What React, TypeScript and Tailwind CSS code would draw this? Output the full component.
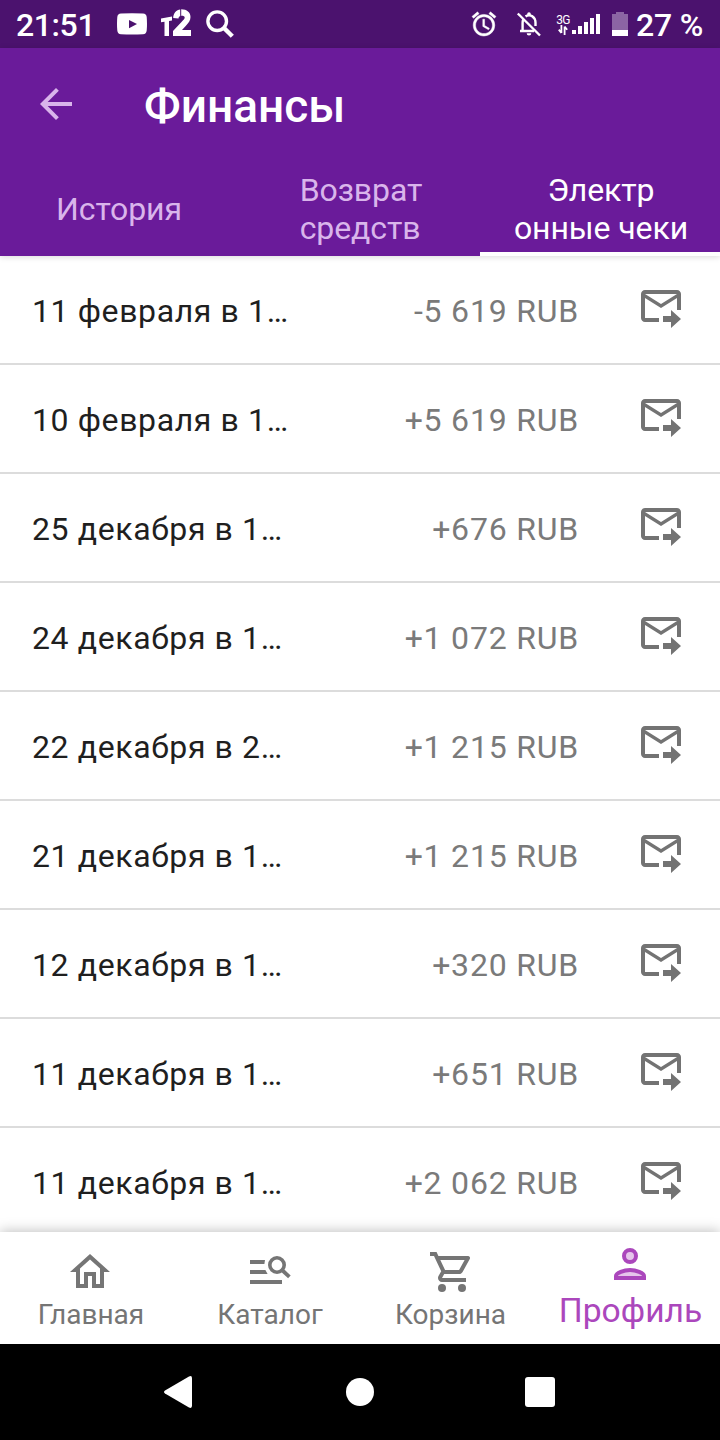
import type { ReactNode } from 'react';

interface Receipt {
  date: string;
  amount: string;
}

const receipts: Receipt[] = [
  { date: '11 февраля в 1…', amount: '-5 619 RUB' },
  { date: '10 февраля в 1…', amount: '+5 619 RUB' },
  { date: '25 декабря в 1…', amount: '+676 RUB' },
  { date: '24 декабря в 1…', amount: '+1 072 RUB' },
  { date: '22 декабря в 2…', amount: '+1 215 RUB' },
  { date: '21 декабря в 1…', amount: '+1 215 RUB' },
  { date: '12 декабря в 1…', amount: '+320 RUB' },
  { date: '11 декабря в 1…', amount: '+651 RUB' },
  { date: '11 декабря в 1…', amount: '+2 062 RUB' },
];

function Icon({ children, className = 'w-12 h-12' }: { children: ReactNode; className?: string }) {
  return (
    <svg viewBox="0 0 24 24" fill="currentColor" className={`flex-shrink-0 ${className}`}>
      {children}
    </svg>
  );
}

function StatusBar() {
  return (
    <div className="flex items-center h-12 bg-[#4b126e] text-white">
      <span className="w-[117px] pl-4 text-[32px] leading-[48px] font-medium tracking-[-0.4px] whitespace-nowrap pt-0.5">21:51</span>
      <svg viewBox="0 0 30 24" className="w-[30px] h-6">
        <path fill="currentColor" fillRule="evenodd" d="M4 1.6Q15 .8 26 1.6Q29.4 1.8 29.7 5Q30.3 12 29.7 18.5Q29.4 22 26 22.2Q15 23 4 22.2Q.6 22 .3 18.5Q-.3 12 .3 5Q.6 1.8 4 1.6ZM12 8V16.2L20 12Z" />
      </svg>
      {/* T2 carrier mark */}
      <svg viewBox="0 0 30 28" className="ml-[14px] w-[30px] h-7 -mt-0.5">
        <path fill="currentColor" d="M0 9.5L11 7.5V11.5L8 12V27H3.5V12.7L0 13.3ZM12.2 9C12.3 4 15.5 1 19.2 .5V7C18 7.4 17.6 8.3 17.5 9.6ZM20.2 .3C26 .3 29.5 3.4 29.5 8C29.5 11.5 27.5 14 24.7 17L21 21H30V27H12V22L20.5 13C22.5 11 23.7 9.9 23.7 8.3C23.7 7.1 22.2 6.6 20.2 6.7Z" />
      </svg>
      <svg viewBox="0 0 28 28" fill="none" stroke="currentColor" className="ml-[15px] w-7 h-7">
        <circle cx="11.2" cy="11.2" r="9.3" strokeWidth="3.4" />
        <path d="M17.5 17.5L26.3 26.3" strokeWidth="4.4" />
      </svg>

      <svg viewBox="2 2 20 20" fill="currentColor" stroke="currentColor" strokeWidth="0.4" className="ml-auto w-6 h-6 overflow-visible">
        <path d="M22 5.72l-4.6-3.86-1.29 1.53 4.6 3.86L22 5.72zM7.88 3.39L6.6 1.86 2 5.71l1.29 1.53 4.59-3.85zM12.5 8H11v6l4.75 2.85.75-1.23-4-2.37V8zM12 4c-4.97 0-9 4.03-9 9s4.02 9 9 9a9 9 0 0 0 0-18zm0 16c-3.87 0-7-3.13-7-7s3.13-7 7-7 7 3.13 7 7-3.13 7-7 7z" />
      </svg>
      <svg viewBox="0 0 24 24" className="ml-[21px] w-6 h-6 overflow-visible">
        <path fill="none" stroke="currentColor" strokeWidth="2.4" d="M6.2 7.5Q5.6 9 5.6 11V18M3 19H17M8.5 4.4Q12 2.4 15.5 4.4Q18.5 6.5 18.5 10.5V14" />
        <path fill="currentColor" d="M10.2 3V2A1.8 1.8 0 0 1 13.8 2V3ZM9.7 21.2H14.3A2.3 2.3 0 0 1 9.7 21.2Z" />
        <path stroke="currentColor" strokeWidth="2.4" d="M.8 1.5L23 23.5" />
      </svg>
      <div className="ml-[14px] flex flex-col items-center w-[16px] h-[22px]">
        <span className="text-[12px] leading-[14px] tracking-[-0.6px]">3G</span>
        <svg viewBox="0 0 10 12" stroke="currentColor" fill="none" className="w-[10px] h-3 -mt-[3px] flex-shrink-0">
          <path strokeWidth="1.8" d="M3.4 1V9M.8 5.6L3.4 9M6.6 11V2.5M9.2 5.8L6.6 2.6" />
        </svg>
      </div>
      <div className="ml-px flex items-end gap-0.5 h-[20px]">
        <i className="w-1 h-1 bg-white" />
        <i className="w-1 h-2 bg-white" />
        <i className="w-1 h-3 bg-white" />
        <i className="w-1 h-4 bg-white" />
        <i className="w-1 h-5 bg-white" />
      </div>
      <svg viewBox="0 0 16 24" className="ml-[12px] w-4 h-6">
        <path fill="#8c65a4" d="M0 2H4V0H12V2H16V18H0Z" />
        <path fill="currentColor" d="M0 18H16V24H0Z" />
      </svg>
      <span className="ml-2 w-[84px] text-[32px] leading-[48px] font-medium tracking-[-0.2px] whitespace-nowrap pt-0.5">27 %</span>
    </div>
  );
}

function Header() {
  return (
    <header className="relative z-10 bg-[#6a1b9a] shadow-[0_1px_6px_rgba(0,0,0,0.15)]">
      <div className="flex items-center h-28 pl-8 text-[#d9b5eb]">
        <Icon>
          <path d="M20 11H7.83l5.59-5.59L12 4l-8 8 8 8 1.41-1.41L7.83 13H20v-2z" />
        </Icon>
        <h1 className="ml-16 pt-1 text-[46px] leading-[56px] font-medium text-white">Финансы</h1>
      </div>
      <div className="grid grid-cols-3 h-24 text-[32px] leading-[38px] tracking-[-0.1px] text-[#d9b5eb]">
        <div className="flex items-center justify-center pr-0.5 pt-0.5">История</div>
        <div className="flex items-center justify-center pl-0.5 pt-0.5">
          <span>Возврат<br />средств</span>
        </div>
        <div className="flex items-center justify-center text-center text-white border-b-4 border-white pt-1.5 pl-0.5">
          <span>Электр<br />онные чеки</span>
        </div>
      </div>
    </header>
  );
}

function ReceiptRow({ date, amount }: Receipt) {
  return (
    <li className="flex items-center h-[109px] flex-shrink-0 pl-8 pr-[35px] border-b-2 border-[#dcdcdc] text-[32px] leading-[38px]">
      <span className="flex-1 pt-0.5 text-[#1f1f1f] tracking-[0.62px]">{date}</span>
      <span className="pt-0.5 text-[#7a7a7a] tracking-[0.8px]">{amount}</span>
      <Icon className="ml-[58px] mb-2 w-12 h-12 text-[#737373]">
        <path d="M22 14V6c0-1.1-.9-2-2-2H4c-1.1 0-2 .9-2 2v12c0 1.1.9 2 2 2h7v-2H4V8l8 5 8-5v6zM12 11L4 6h16z" />
        <path d="M13 17h4v-3l5 4.5-5 4.5v-3h-4z" />
      </Icon>
    </li>
  );
}

function BottomNav() {
  return (
    <nav className="relative z-10 grid grid-cols-4 h-28 bg-white text-[28px] leading-[38px] text-[#757575] shadow-[0_-1px_12px_rgba(0,0,0,0.25)]">
      <div className="flex flex-col items-center pt-4">
        <Icon>
          <path d="M12 5.69l5 4.5V18h-2v-6H9v6H7v-7.81l5-4.5M12 3L2 12h3v8h6v-6h2v6h6v-8h3L12 3z" />
        </Icon>
        <span className="pl-0.5">Главная</span>
      </div>
      <div className="flex flex-col items-center pt-4">
        <Icon>
          <path d="M2 6H9.5L9.2 8H2ZM2 11H9.7L10.8 13H2ZM2 16H18V18H2Z" />
          <circle cx="15.5" cy="8.5" r="3.6" fill="none" stroke="currentColor" strokeWidth="1.8" />
          <path d="M18 11L21.7 14.4" stroke="currentColor" strokeWidth="1.9" />
        </Icon>
        <span>Каталог</span>
      </div>
      <div className="flex flex-col items-center pt-4">
        <Icon className="w-12 h-12 ml-1">
          <path d="M15.55 13c.75 0 1.41-.41 1.75-1.03l3.58-6.49A.996.996 0 0 0 20.01 4H5.21l-.94-2H1v2h2l3.6 7.59-1.35 2.44C4.52 15.37 5.48 17 7 17h12v-2H7l1.1-2h7.45zM6.16 6h12.15l-2.76 5H8.53L6.16 6z" />
          <circle cx="7" cy="20" r="2" />
          <circle cx="17" cy="20" r="2" />
        </Icon>
        <span className="pl-px">Корзина</span>
      </div>
      <div className="flex flex-col items-center pt-2 text-[#ab47bc]">
        <Icon>
          <circle cx="12" cy="8" r="3" fill="#e6c5eb" stroke="currentColor" strokeWidth="2" />
          <path fill="#e6c5eb" stroke="currentColor" strokeWidth="2" d="M5 19V18C5 16.5 9 15 12 15S19 16.5 19 18V19Z" />
        </Icon>
        <span className="pl-px pt-px text-[33.6px] leading-[44px] whitespace-nowrap">Профиль</span>
      </div>
    </nav>
  );
}

function SystemBar() {
  return (
    <div className="flex items-center justify-between h-24 pl-[164px] pr-[165px] bg-black text-white">
      <svg viewBox="0 0 28 32" fill="currentColor" className="w-7 h-8">
        <path d="M1 14.5L25 .4Q28-.8 28 2.2V29.8Q28 32.8 25 31.6L1 17.5Q-1 16 1 14.5Z" />
      </svg>
      <div className="w-7 h-7 ml-[2px] rounded-full bg-white" />
      <div className="w-[30px] h-[30px] rounded-[3px] bg-white" />
    </div>
  );
}

export default function App() {
  return (
    <div className="flex flex-col w-[720px] h-[1440px] overflow-hidden bg-white font-[Roboto,sans-serif]">
      <StatusBar />
      <Header />
      <ul className="flex flex-col flex-1 min-h-0 overflow-hidden">
        {receipts.map((receipt, index) => (
          <ReceiptRow key={index} {...receipt} />
        ))}
      </ul>
      <BottomNav />
      <SystemBar />
    </div>
  );
}
